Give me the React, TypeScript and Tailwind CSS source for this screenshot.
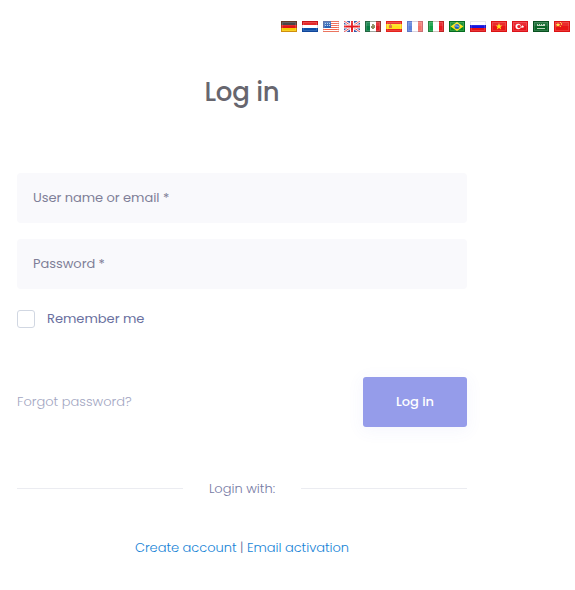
import React from 'react';

type FlagProps = { name: string; border: string; edge?: number; children: React.ReactNode };

function Flag({ name, border, edge = 0.6, children }: FlagProps) {
  return (
    <svg className="block h-[11px] w-4" viewBox="0 0 16 11" role="img" aria-label={name}>
      {children}
      <rect x="1" y="1" width="14" height="4" fill="#fff" opacity=".1" />
      <rect x="1.5" y="1.5" width="13" height="8" fill="none" stroke="#fff" strokeOpacity=".15" />
      <rect x=".5" y=".5" width="15" height="10" fill="none" stroke={border} strokeOpacity={edge} />
    </svg>
  );
}

function Bands({ colors, vertical = false }: { colors: string[]; vertical?: boolean }) {
  return (
    <>
      {colors.map((c, i) =>
        vertical ? (
          <rect key={i} x={[0, 5, 11][i]} width={[5, 6, 5][i]} height="11" fill={c} />
        ) : (
          <rect key={i} y={[0, 4, 7][i]} width="16" height={[4, 3, 4][i]} fill={c} />
        ),
      )}
    </>
  );
}

function Flags() {
  return (
    <div className="flex justify-end gap-[5px] pr-[5px]">
      <Flag name="Deutsch" border="#a04a20" edge={0.45}><Bands colors={['#363030', '#e01515', '#f7c900']} /></Flag>
      <Flag name="Nederlands" border="#302050" edge={0.15}><Bands colors={['#e01010', '#ffffff', '#0b4da8']} /></Flag>
      <Flag name="English (US)" border="#e0a090" edge={0.3}>
        <rect width="16" height="11" fill="#fff" />
        {[0, 2, 4, 6, 8, 10].map((y) => <rect key={y} y={y} width="16" height="1" fill="#f0644c" />)}
        <rect width="8" height="7" fill="#2b63b5" />
        {[2, 4, 6].map((x) => [2, 4].map((y) => <rect key={x + '-' + y} x={x} y={y} width="1" height="1" fill="#b5ceee" />))}
      </Flag>
      <Flag name="English (UK)" border="#ffffff" edge={0.1}>
        <rect width="16" height="11" fill="#20469f" />
        <path d="M0 0L16 11M16 0L0 11" stroke="#fff" strokeWidth="2.6" />
        <path d="M0 0L16 11M16 0L0 11" stroke="#e33b40" strokeWidth="1" />
        <path d="M8 0V11M0 5.5H16" stroke="#fff" strokeWidth="4" />
        <path d="M8 0V11M0 5.5H16" stroke="#e3191f" strokeWidth="2" />
      </Flag>
      <Flag name="Español (México)" border="#405040" edge={0.5}>
        <Bands vertical colors={['#087d43', '#ffffff', '#df2027']} />
        <path d="M7 3h2v1h1v3H9v1H7V7H6V5h1z" fill="#8e8b62" />
      </Flag>
      <Flag name="Español" border="#d92a20" edge={0.15}>
        <rect width="16" height="11" fill="#e8201a" />
        <rect y="3" width="16" height="5" fill="#ffe11b" />
        <path d="M3 4h1v-1h1v1h1v3H3z" fill="#d87a40" />
      </Flag>
      <Flag name="Français" border="#706090" edge={0.28}><Bands vertical colors={['#5d83dc', '#ffffff', '#f2736a']} /></Flag>
      <Flag name="Italiano" border="#604030" edge={0.3}><Bands vertical colors={['#10a044', '#ffffff', '#e71920']} /></Flag>
      <Flag name="Português" border="#07581e">
        <rect width="16" height="11" fill="#078b22" />
        <path d="M8 1L14.5 5.5L8 10L1.5 5.5Z" fill="#ffe21a" />
        <circle cx="8" cy="5.5" r="2.5" fill="#1d63b8" />
        <path d="M6 5h2l2 1" stroke="#b8daf0" strokeWidth=".7" fill="none" />
      </Flag>
      <Flag name="Русский" border="#404070" edge={0.13}><Bands colors={['#ffffff', '#1515df', '#e81212']} /></Flag>
      <Flag name="Tiếng Việt" border="#d31010">
        <rect width="16" height="11" fill="#e81414" />
        <path d="M8 2l.9 2.4h2.5l-2 1.6.8 2.6L8 7.1 5.8 8.6l.8-2.6-2-1.6h2.5z" fill="#ffe51a" />
      </Flag>
      <Flag name="Türkçe" border="#d31018">
        <rect width="16" height="11" fill="#e8151d" />
        <circle cx="6.2" cy="5.5" r="2.7" fill="#fff" />
        <circle cx="7" cy="5.5" r="1.7" fill="#e8252b" />
        <path d="M9 5.5l1-.5.5-1 .5 1 1.3.2-1 .8.2 1-1-.4-1 .5z" fill="#fff" />
      </Flag>
      <Flag name="العربية" border="#06431a">
        <rect width="16" height="11" fill="#0a6427" />
        <path d="M4 3h1v1h1V3h1v1h1V3h1v1h1V3h2v2H4z" fill="#b9d2b9" />
        <path d="M4 7.5h8" stroke="#b9d2b9" />
      </Flag>
      <Flag name="中文" border="#d31010">
        <rect width="16" height="11" fill="#e81414" />
        <path d="M4 1.7l.7 1.4h1.6l-1.1 1 .4 1.7L4 5l-1.6.8.4-1.7-1.1-1h1.6z" fill="#ffdf3d" />
        <path d="M6 1h1v1H6zM7 2h1v2H7zM6 5h1v1H6z" fill="#ffb32b" />
      </Flag>
    </div>
  );
}

function Field({ label, type }: { label: string; type: string }) {
  return (
    <input
      type={type}
      aria-label={label}
      placeholder={label}
      className="block h-[50px] w-full rounded bg-[#f9f9fc] px-4 text-[13px] tracking-[-0.04px] text-[#7c7c99] outline-none placeholder:text-[#7f7f98] placeholder:opacity-100"
    />
  );
}

export default function App() {
  return (
    <main className="h-[590px] w-[575px] overflow-hidden bg-white pt-[21px] font-[Poppins,Inter,sans-serif] text-[13px] leading-5">
      <Flags />
      <form className="ml-[17px] w-[450px]" onSubmit={(e) => e.preventDefault()}>
        <h1 className="mt-10 text-center text-[26px] leading-10 font-medium tracking-[-0.2px] text-[#67666e]">Log in</h1>
        <div className="mt-[61px] flex flex-col gap-4">
          <Field label="User name or email *" type="text" />
          <Field label="Password *" type="password" />
        </div>
        <label className="mt-5 flex items-center gap-3 text-[#6a70a0]">
          <input type="checkbox" className="my-px size-[18px] appearance-none rounded-[3px] border border-[#d1d7e2]" />
          <span>Remember me</span>
        </label>
        <div className="mt-12 flex items-center justify-between">
          <a href="#" className="font-light text-[#a2a6c2]">Forgot password?</a>
          <button className="h-[50px] w-[104px] rounded-[3px] bg-[#959cea] font-medium text-white shadow-[0_3px_16px_2px_rgba(88,103,221,0.05)]">Log in</button>
        </div>
        <div className="mt-[51px] flex items-center text-[#767aa4]">
          <span className="h-px flex-1 bg-[#ebecf1]" />
          <span className="-mb-px w-[118px] pt-px text-center font-light">Login with:</span>
          <span className="h-px flex-1 bg-[#ebecf1]" />
        </div>
        <p className="mt-10 text-center font-light tracking-[-0.03px] text-[#646c9a]">
          <a href="#" className="text-[#1683d6]">Create account</a> | <a href="#" className="text-[#1683d6]">Email activation</a>
        </p>
      </form>
    </main>
  );
}
